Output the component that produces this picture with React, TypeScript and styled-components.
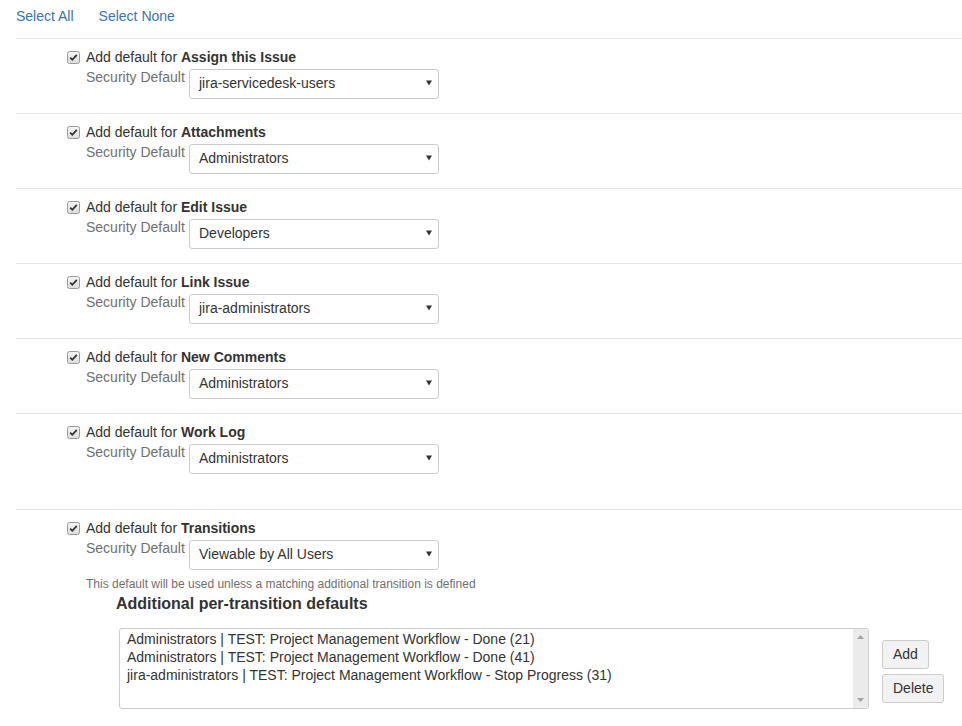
import React from "react";
import styled, { createGlobalStyle } from "styled-components";

const Global = createGlobalStyle`
  html, body { margin: 0; padding: 0; background: #fff; }
  body { font-family: "Liberation Sans", Arial, sans-serif; font-size: 14px; color: #333; }
`;

const Page = styled.div`
  padding-left: 16px;
  width: 946px;
`;

const LinkBar = styled.div`
  display: flex;
  gap: 25px;
  padding: 6px 0 12px 0;
  line-height: 20px;
`;

const Link = styled.a`
  color: #3b73af;
  text-decoration: none;
  cursor: pointer;
`;

const Section = styled.div<{ $extra?: number }>`
  border-top: 1px solid #e6e6e6;
  padding: 8px 0 ${(p) => 14 + (p.$extra || 0)}px 51px;
`;

const CheckRow = styled.div`
  display: flex;
  align-items: center;
  height: 20px;
  line-height: 20px;
`;

const CheckBox = styled.span`
  display: inline-flex;
  width: 13px;
  height: 13px;
  margin-right: 6px;
  margin-top: 1px;
`;

const Bold = styled.b`
  font-weight: bold;
`;

const FieldRow = styled.div`
  display: flex;
  align-items: flex-start;
  margin-left: 19px;
`;

const FieldLabel = styled.span`
  width: 103px;
  color: #707070;
  line-height: 20px;
`;

const SelectBox = styled.div`
  margin-top: 2px;
  width: 250px;
  height: 30px;
  box-sizing: border-box;
  border: 1px solid #ccc;
  border-radius: 3px;
  background: #fff;
  display: flex;
  align-items: center;
  justify-content: space-between;
  padding: 0 6px 2px 9px;
  color: #333;
`;

const Help = styled.div`
  margin: 6px 0 0 19px;
  font-size: 12px;
  line-height: 16px;
  color: #707070;
`;

const SubHeading = styled.h4`
  margin: 2px 0 0 49px;
  font-size: 16px;
  line-height: 20px;
  font-weight: bold;
  color: #333;
`;

const ListArea = styled.div`
  display: flex;
  align-items: flex-start;
  margin: 14px 0 0 52px;
`;

const ListBox = styled.div`
  width: 750px;
  height: 81px;
  box-sizing: border-box;
  border: 1px solid #ccc;
  border-radius: 3px;
  display: flex;
  overflow: hidden;
`;

const ListItems = styled.div`
  flex: 1;
  padding: 1px 0 0 7px;
  line-height: 18px;
  color: #333;
`;

const ScrollBar = styled.div`
  width: 15px;
  background: #ebebeb;
  display: flex;
  flex-direction: column;
  justify-content: space-between;
  align-items: center;
  padding: 6px 0;
`;

const ButtonCol = styled.div`
  display: flex;
  flex-direction: column;
  align-items: flex-start;
  gap: 5px;
  margin: 12px 0 0 13px;
`;

const Button = styled.button`
  font-family: "Liberation Sans", Arial, sans-serif;
  font-size: 14px;
  color: #333;
  background: #f2f2f2;
  border: 1px solid #ccc;
  border-radius: 3px;
  height: 29px;
  padding: 0 10px 1px;
  line-height: 20px;
  cursor: pointer;
`;

const Check = () => (
  <CheckBox>
    <svg width="13" height="13" viewBox="0 0 13 13">
      <defs>
        <linearGradient id="cbg" x1="0" y1="0" x2="0" y2="1">
          <stop offset="0" stopColor="#f4f4f4" />
          <stop offset="1" stopColor="#dcdcdc" />
        </linearGradient>
      </defs>
      <rect x="0.5" y="0.5" width="12" height="12" rx="2" fill="url(#cbg)" stroke="#9a9a9a" />
      <path d="M3.2 6.6 L5.3 8.8 L9.8 3.8" fill="none" stroke="#333" strokeWidth="1.8" />
    </svg>
  </CheckBox>
);

const Arrow = () => (
  <svg width="6" height="6" viewBox="0 0 6 6">
    <path d="M0 0.5 H6 L3 5.5 Z" fill="#333" />
  </svg>
);

const ScrollArrow = ({ up }: { up?: boolean }) => (
  <svg width="7" height="4" viewBox="0 0 7 4">
    <path d={up ? "M0 4 H7 L3.5 0 Z" : "M0 0 H7 L3.5 4 Z"} fill="#a3a3a3" />
  </svg>
);

type Item = { name: string; value: string; extra?: number };

const items: Item[] = [
  { name: "Assign this Issue", value: "jira-servicedesk-users" },
  { name: "Attachments", value: "Administrators" },
  { name: "Edit Issue", value: "Developers" },
  { name: "Link Issue", value: "jira-administrators" },
  { name: "New Comments", value: "Administrators" },
  { name: "Work Log", value: "Administrators", extra: 21 },
];

const Field = ({ value }: { value: string }) => (
  <FieldRow>
    <FieldLabel>Security Default</FieldLabel>
    <SelectBox>
      <span>{value}</span>
      <Arrow />
    </SelectBox>
  </FieldRow>
);

const Head = ({ name }: { name: string }) => (
  <CheckRow>
    <Check />
    <span>
      Add default for <Bold>{name}</Bold>
    </span>
  </CheckRow>
);

export default function App() {
  return (
    <Page>
      <Global />
      <LinkBar>
        <Link>Select All</Link>
        <Link>Select None</Link>
      </LinkBar>
      {items.map((it) => (
        <Section key={it.name} $extra={it.extra}>
          <Head name={it.name} />
          <Field value={it.value} />
        </Section>
      ))}
      <Section>
        <Head name="Transitions" />
        <Field value="Viewable by All Users" />
        <Help>This default will be used unless a matching additional transition is defined</Help>
        <SubHeading>Additional per-transition defaults</SubHeading>
        <ListArea>
          <ListBox>
            <ListItems>
              <div>Administrators | TEST: Project Management Workflow - Done (21)</div>
              <div>Administrators | TEST: Project Management Workflow - Done (41)</div>
              <div>jira-administrators | TEST: Project Management Workflow - Stop Progress (31)</div>
            </ListItems>
            <ScrollBar>
              <ScrollArrow up />
              <ScrollArrow />
            </ScrollBar>
          </ListBox>
          <ButtonCol>
            <Button>Add</Button>
            <Button>Delete</Button>
          </ButtonCol>
        </ListArea>
      </Section>
    </Page>
  );
}
